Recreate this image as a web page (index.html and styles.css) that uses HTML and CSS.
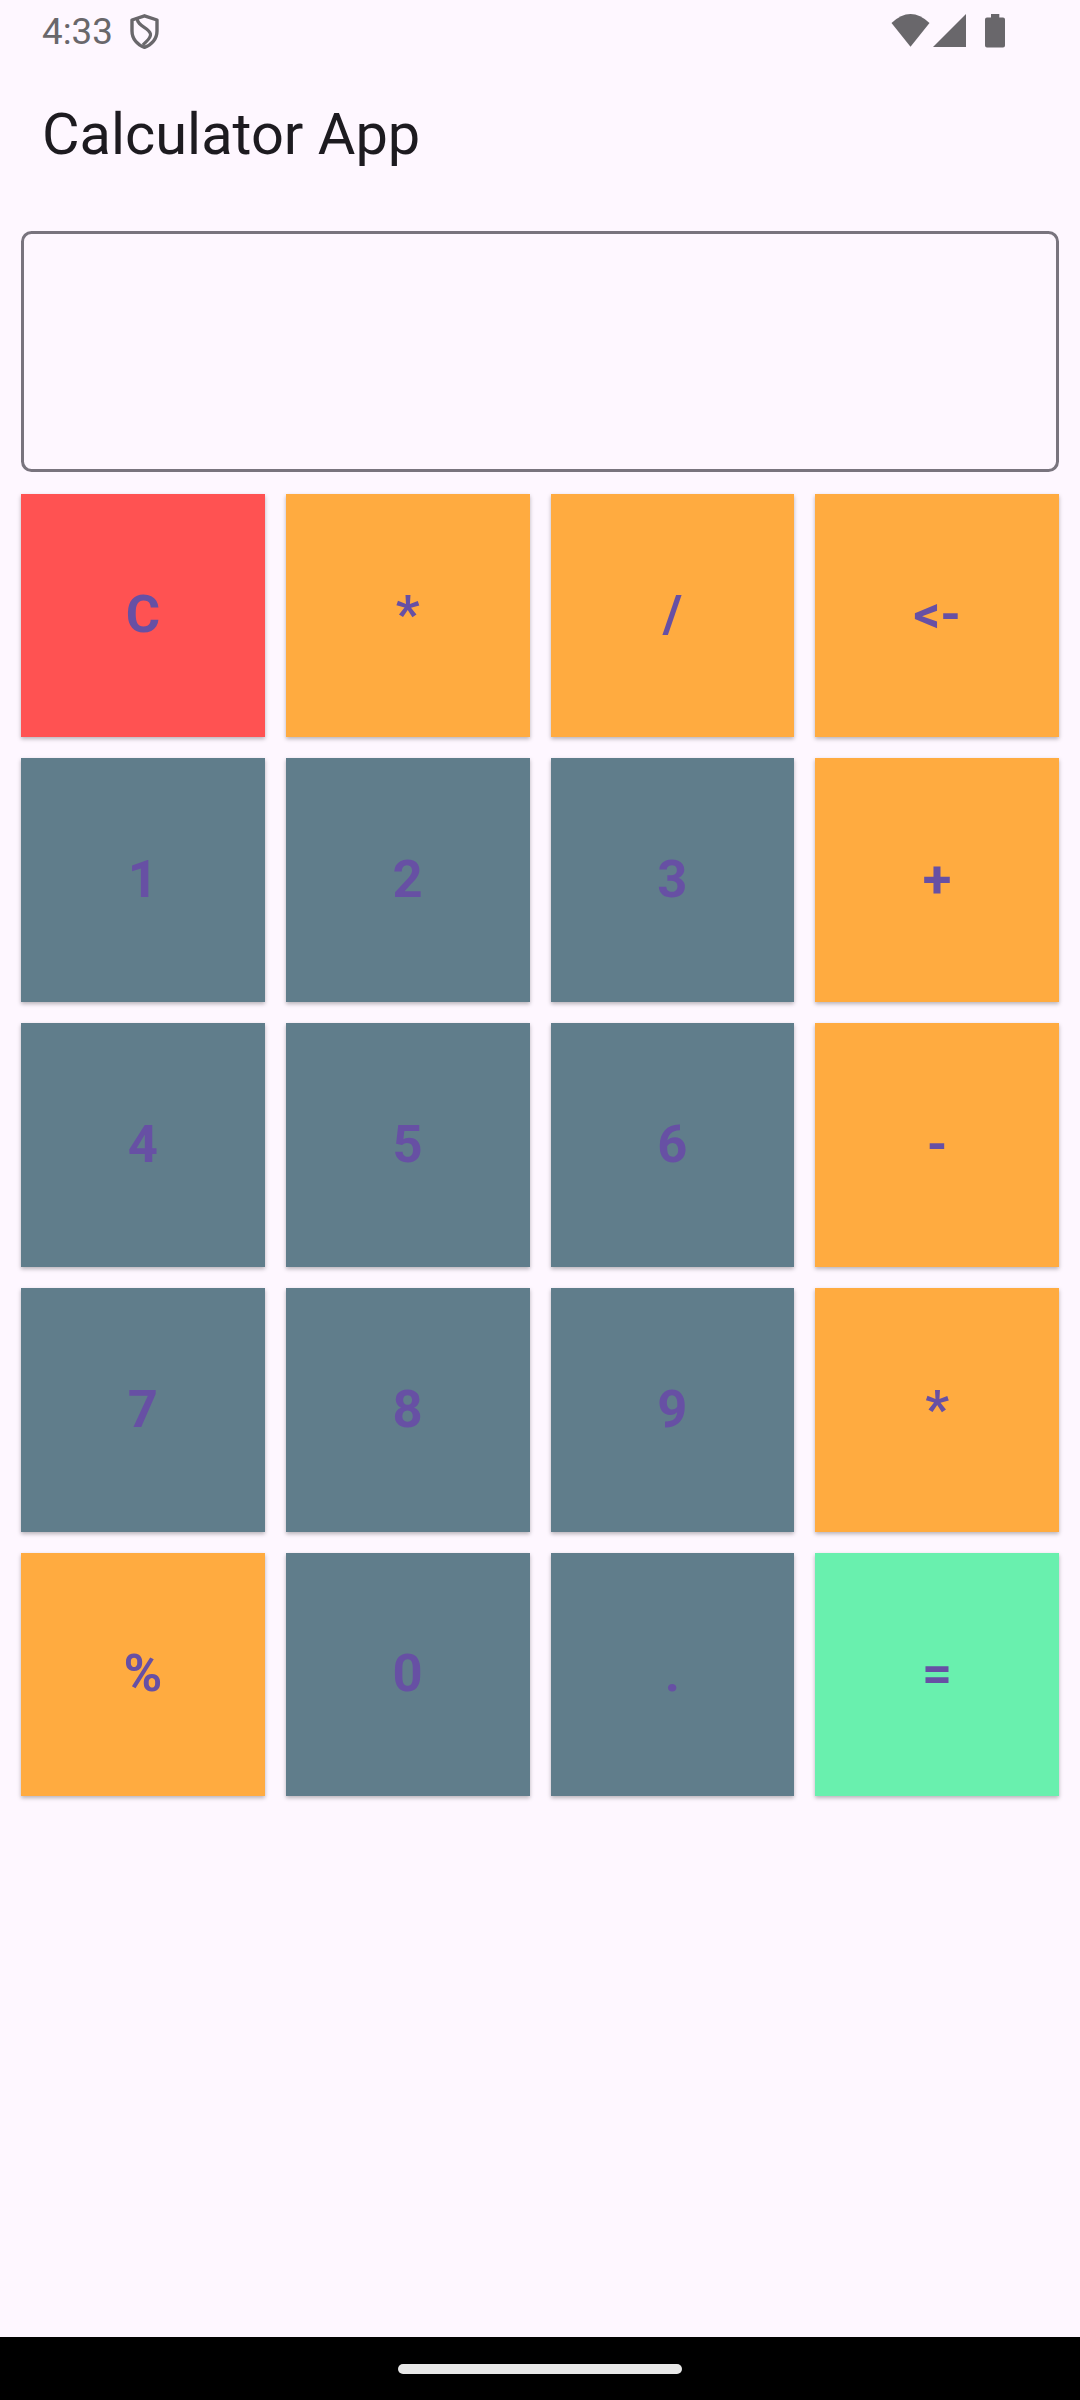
FILE: index.html
```html
<!DOCTYPE html>
<html>
<head>
<meta charset="UTF-8">
<meta name="viewport" content="width=device-width, initial-scale=1.0">
<title>Calculator App</title>
<link rel="stylesheet" href="styles.css">
</head>
<body>

<div class="statusbar">
  <div class="status-left">
    <span class="clock">4:33</span>
    <svg class="shield" width="29" height="35" viewBox="0 0 29 35">
      <path d="M14.500 1.800 L27 6 V17 C27 25 21.500 31 14.500 33.300 C7.500 31 2 25 2 17 V6 Z" fill="none" stroke="#69676b" stroke-width="3.400" stroke-linejoin="round"/>
      <path d="M7 4 C7.500 13 19 13 20.500 20 C21 25 16 27 13 31" fill="none" stroke="#69676b" stroke-width="3.200"/>
    </svg>
  </div>
  <div class="status-right">
    <svg class="wifi" width="39" height="33" viewBox="0 0 39 33"><path d="M0.500 9 Q19.500 -9 38.500 9 L19.500 32.800 Z" fill="#69676b"/></svg>
    <svg class="cell" width="33" height="33" viewBox="0 0 33 33"><path d="M0 33 L33 0 V33 Z" fill="#69676b"/></svg>
    <svg class="battery" width="20" height="34" viewBox="0 0 20 34"><path d="M6 0 H14.300 V3.500 H18 Q20 3.500 20 5.500 V31.500 Q20 33.500 18 33.500 H2 Q0 33.500 0 31.500 V5.500 Q0 3.500 2 3.500 H6 Z" fill="#69676b"/></svg>
  </div>
</div>

<header class="appbar">Calculator App</header>

<main class="content">
  <div class="display"></div>

  <div class="keypad">
    <button class="key red">C</button>
    <button class="key orange">*</button>
    <button class="key orange">/</button>
    <button class="key orange">&lt;-</button>

    <button class="key slate">1</button>
    <button class="key slate">2</button>
    <button class="key slate">3</button>
    <button class="key orange">+</button>

    <button class="key slate">4</button>
    <button class="key slate">5</button>
    <button class="key slate">6</button>
    <button class="key orange">-</button>

    <button class="key slate">7</button>
    <button class="key slate">8</button>
    <button class="key slate">9</button>
    <button class="key orange">*</button>

    <button class="key orange">%</button>
    <button class="key slate">0</button>
    <button class="key slate">.</button>
    <button class="key green">=</button>
  </div>
</main>

<div class="navbar"><div class="handle"></div></div>

</body>
</html>
```

FILE: styles.css
```css
* {
  box-sizing: border-box;
}

body {
  display: flex;
  flex-direction: column;
  width: 1080px;
  height: 2400px;
  margin: 0;
  overflow: hidden;
  background: #fef7ff;
  font-family: Roboto, "Noto Sans", sans-serif;
}

.statusbar {
  display: flex;
  justify-content: space-between;
  align-items: flex-start;
  height: 63px;
  padding: 14px 75px 0 42px;
}

.status-left {
  display: flex;
  align-items: flex-start;
  gap: 17px;
}

.clock {
  font-size: 36.75px;
  line-height: 36px;
  color: #69676b;
}

.status-right {
  display: flex;
  align-items: flex-start;
}

.cell {
  margin-left: 3px;
}

.battery {
  margin-left: 19px;
}

.appbar {
  display: flex;
  align-items: center;
  height: 147px;
  padding: 0 0 6px 42px;
  font-size: 57.75px;
  color: #1d1b20;
}

.content {
  flex: 1;
  padding: 21px;
}

.display {
  height: 241px;
  margin-bottom: 21.500px;
  border: 3px solid #79747e;
  border-radius: 10.500px;
}

.keypad {
  display: grid;
  grid-template-columns: repeat(4, 1fr);
  gap: 21px;
}

.key {
  aspect-ratio: 1;
  padding: 0 0 2px;
  border: 0;
  font-family: inherit;
  font-size: 52.500px;
  font-weight: 700;
  color: #6750a4;
  box-shadow: 0 2px 4px rgba(0, 0, 0, 0.28);
}

.red {
  background: #ff5252;
}

.orange {
  background: #ffab40;
}

.slate {
  background: #607d8b;
}

.green {
  background: #69f0ae;
}

.navbar {
  display: flex;
  justify-content: center;
  height: 63px;
  padding-top: 27px;
  background: #000;
}

.handle {
  width: 284px;
  height: 10px;
  border-radius: 5px;
  background: #e8e8e8;
}
```
